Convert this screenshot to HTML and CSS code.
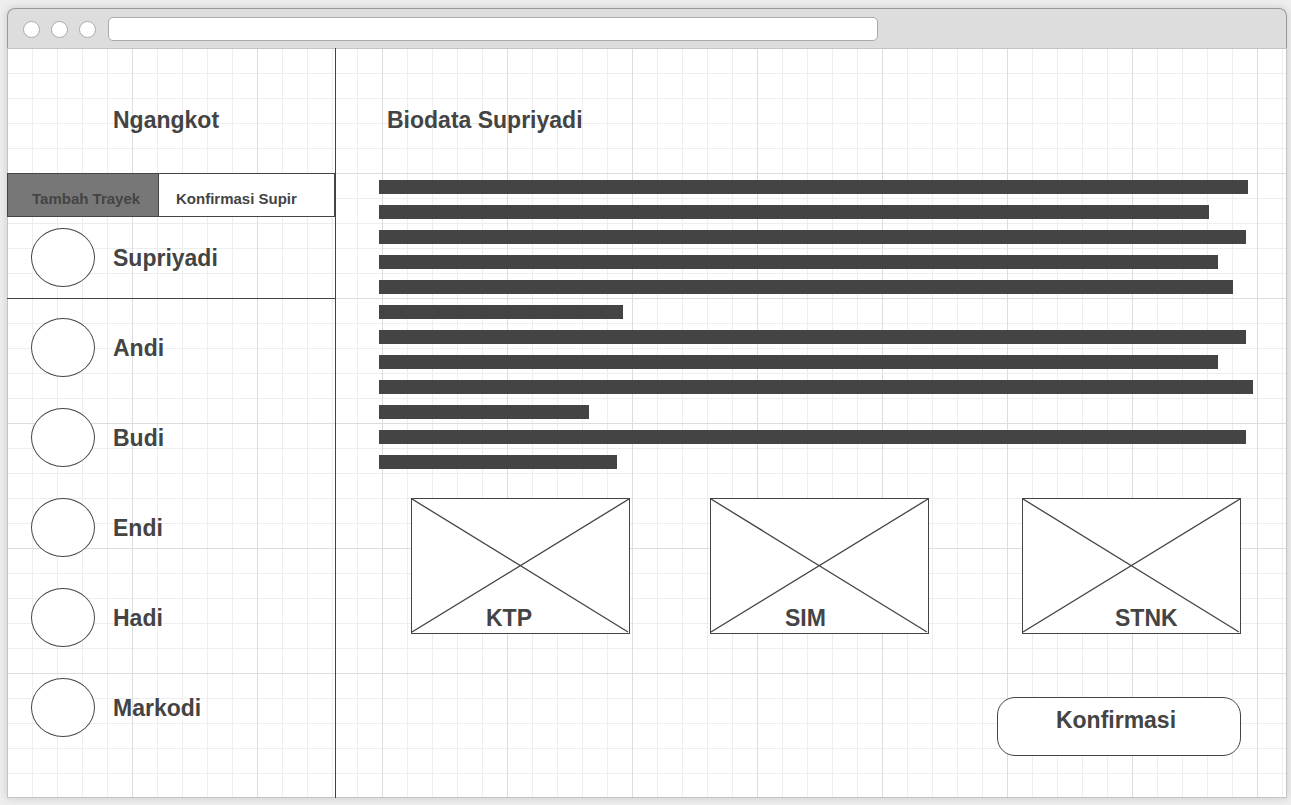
FILE: index.html
```html
<!DOCTYPE html>
<html lang="id">
<head>
  <meta charset="utf-8">
  <meta name="viewport" content="width=device-width, initial-scale=1">
  <title>Ngangkot</title>
  <link rel="stylesheet" href="styles.css">
</head>
<body>
  <div class="window">
    <header class="toolbar">
      <div class="dots"><span class="dot"></span><span class="dot"></span><span class="dot"></span></div>
      <input class="address" type="text" aria-label="Alamat">
    </header>

    <div class="canvas">
      <aside class="sidebar">
        <h1 class="heading brand">Ngangkot</h1>
        <nav class="tabs">
          <button class="tab tab-muted" type="button">Tambah Trayek</button>
          <button class="tab tab-active" type="button">Konfirmasi Supir</button>
        </nav>
        <ul class="drivers">
          <li class="driver selected"><a class="driver-link" href="#supriyadi"><span class="avatar"></span>Supriyadi</a></li>
          <li class="driver"><a class="driver-link" href="#andi"><span class="avatar"></span>Andi</a></li>
          <li class="driver"><a class="driver-link" href="#budi"><span class="avatar"></span>Budi</a></li>
          <li class="driver"><a class="driver-link" href="#endi"><span class="avatar"></span>Endi</a></li>
          <li class="driver"><a class="driver-link" href="#hadi"><span class="avatar"></span>Hadi</a></li>
          <li class="driver"><a class="driver-link" href="#markodi"><span class="avatar"></span>Markodi</a></li>
        </ul>
      </aside>

      <main class="detail">
        <h2 class="heading">Biodata Supriyadi</h2>
        <div class="lines">
          <span class="line" style="width: 99.4%"></span>
          <span class="line" style="width: 95%"></span>
          <span class="line" style="width: 99.2%"></span>
          <span class="line" style="width: 96%"></span>
          <span class="line" style="width: 97.7%"></span>
          <span class="line" style="width: 27.9%"></span>
          <span class="line" style="width: 99.2%"></span>
          <span class="line" style="width: 96%"></span>
          <span class="line" style="width: 100%"></span>
          <span class="line" style="width: 24%"></span>
          <span class="line" style="width: 99.2%"></span>
          <span class="line" style="width: 27.2%"></span>
        </div>
        <div class="documents">
          <figure class="document">
            <svg class="cross" viewBox="0 0 217 134" preserveAspectRatio="none" aria-hidden="true"><path d="M0 0L216 133M217 0L0 133"/></svg>
            <figcaption class="caption">KTP</figcaption>
          </figure>
          <figure class="document">
            <svg class="cross" viewBox="0 0 217 134" preserveAspectRatio="none" aria-hidden="true"><path d="M0 0L216 133M217 0L0 133"/></svg>
            <figcaption class="caption">SIM</figcaption>
          </figure>
          <figure class="document">
            <svg class="cross" viewBox="0 0 217 134" preserveAspectRatio="none" aria-hidden="true"><path d="M0 0L216 133M217 0L0 133"/></svg>
            <figcaption class="caption caption-wide">STNK</figcaption>
          </figure>
        </div>
        <button class="confirm" type="button">Konfirmasi</button>
      </main>
    </div>
  </div>
</body>
</html>
```
FILE: styles.css
```css
* {
  box-sizing: border-box;
}

body {
  margin: 0;
  min-height: 100vh;
  display: flex;
  padding: 8px 4px 7px 7px;
  background: #eee;
  color: #444;
  font: bold 23px/28px "Liberation Sans", Arial, sans-serif;
}

button,
input {
  font: inherit;
  color: inherit;
}

.window {
  flex: 1;
  min-width: 0;
  display: flex;
  flex-direction: column;
  border-radius: 8px 8px 0 0;
  box-shadow: 0 0 8px rgba(0, 0, 0, 0.15);
}

.toolbar {
  display: flex;
  align-items: flex-end;
  gap: 12px;
  padding: 8px 0 7px 15px;
  border: 1px solid #999;
  border-bottom: 0;
  border-radius: 8px 8px 0 0;
  background: #ddd;
}

.dots {
  display: flex;
  gap: 11px;
  padding-bottom: 3px;
}

.dot {
  width: 17px;
  height: 17px;
  border: 1px solid #aaa;
  border-radius: 50%;
  background: #fff;
}

.address {
  width: 61%;
  height: 24px;
  padding: 0 8px;
  border: 1px solid #aaa;
  border-radius: 5px;
  background: #fff;
  font-size: 15px;
}

.canvas {
  flex: 1;
  display: flex;
  background-color: #fff;
  background-image:
    linear-gradient(90deg, #ddd 1px, transparent 1px),
    linear-gradient(#ddd 1px, transparent 1px),
    linear-gradient(90deg, #eee 1px, transparent 1px),
    linear-gradient(#eee 1px, transparent 1px);
  background-size: 125px 125px, 125px 125px, 25px 25px, 25px 25px;
  box-shadow: inset 0 0 0 1px #c4c4c4;
}

.sidebar {
  flex: none;
  width: 329px;
  border-right: 1px solid #444;
}

.heading {
  margin: 0;
  padding: 58px 0 39px 8px;
  font-size: 23px;
}

.brand {
  padding-left: 106px;
}

.tabs {
  display: flex;
}

.tab {
  padding: 16px 0 8px 24px;
  border: 1px solid #444;
  border-radius: 0;
  font-size: 15px;
  line-height: 18px;
  text-align: left;
}

.tab-muted {
  width: 152px;
  background: #777;
}

.tab-active {
  flex: 1;
  padding-left: 17px;
  border-left: 0;
  background: #fff;
}

.drivers {
  display: grid;
  gap: 19px;
  margin: 0;
  padding: 11px 0;
  list-style: none;
}

.driver {
  padding: 0 24px 11px;
  border-bottom: 1px solid transparent;
}

.selected {
  border-bottom-color: #444;
}

.driver-link {
  display: flex;
  align-items: center;
  gap: 18px;
  color: inherit;
  text-decoration: none;
}

.avatar {
  width: 64px;
  height: 59px;
  border: 1px solid #444;
  border-radius: 50%;
  background: #fff;
}

.detail {
  flex: 1;
  min-width: 0;
  display: flex;
  flex-direction: column;
  padding: 0 34px 42px 43px;
}

.lines {
  display: grid;
  gap: 11px;
  padding-top: 7px;
}

.line {
  height: 14px;
  background: #444;
}

.documents {
  display: grid;
  grid-template-columns: 299fr 312fr 219px;
  padding: 29px 12px 63px 32px;
}

.document {
  display: grid;
  width: 219px;
  height: 136px;
  margin: 0;
  border: 1px solid #444;
  background: #fff;
}

.cross,
.caption {
  grid-area: 1 / 1;
}

.cross {
  width: 100%;
  height: 100%;
  fill: none;
  stroke: #444;
  stroke-width: 1.3;
}

.caption {
  align-self: end;
  padding: 0 0 1px 74px;
}

.caption-wide {
  padding-left: 92px;
}

.confirm {
  align-self: flex-end;
  width: 244px;
  margin-right: 12px;
  padding: 8px 6px 21px 0;
  border: 1px solid #444;
  border-radius: 18px;
  background: #fff;
}
```
